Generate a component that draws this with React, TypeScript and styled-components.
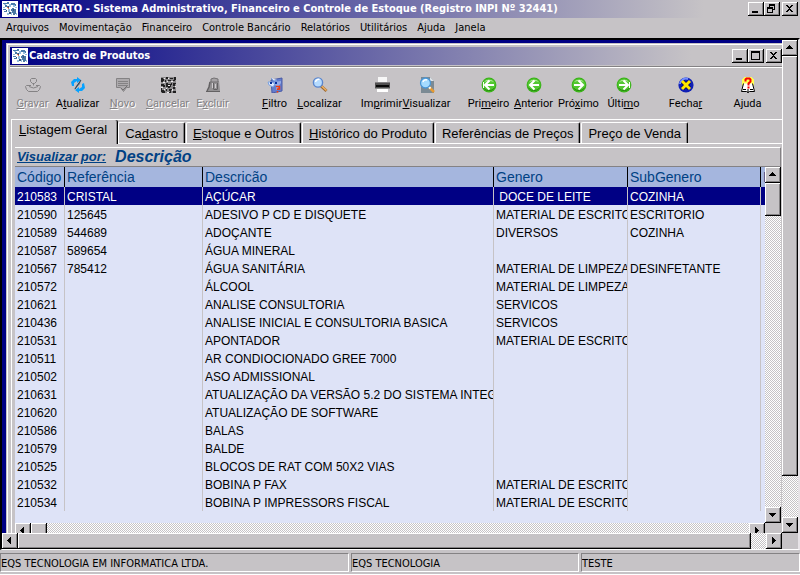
import React from "react";
import styled, { createGlobalStyle, css } from "styled-components";

const face = "#c6c3c6";
const navy = "#000084";
const shade = "#848284";
const uiFont = '"DejaVu Sans Condensed", "DejaVu Sans", sans-serif';
const gridFont = '"Liberation Sans", Arial, sans-serif';

const Global = createGlobalStyle`
  * { box-sizing: border-box; }
  html, body, #root { height: 100%; }
  body { margin: 0; background: ${face}; font-family: ${uiFont}; overflow: hidden; }
  button { font: inherit; color: inherit; margin: 0; padding: 0; border: 0; background: none; }
`;

const raised = css`
  background: ${face};
  box-shadow: inset -1px -1px 0 #000, inset 1px 1px 0 #fff, inset -2px -2px 0 ${shade};
`;
const checker = css`
  background: conic-gradient(#fff 25%, ${face} 0 50%, #fff 0 75%, ${face} 0) 0 0 / 2px 2px;
`;

const Page = styled.div`
  display: flex;
  flex-direction: column;
  height: 100vh;
  background: ${face};
`;
const TitleBar = styled.header`
  display: flex;
  align-items: center;
  flex: none;
  height: 18px;
  padding: 0 2px;
  background: linear-gradient(90deg, ${navy}, ${face} 88%);
  color: #fff;
`;
const Title = styled.h1`
  flex: 1;
  margin: 0 0 0 1px;
  font-size: 11px;
  line-height: 16px;
  font-weight: bold;
  white-space: nowrap;
`;
const WindowButtons = styled.div`
  display: flex;
  button:last-child { margin-left: 2px; }
`;
const WindowButton = styled.button`
  ${raised}
  width: 16px;
  height: 14px;
  svg { display: block; }
`;
const MenuBar = styled.nav`
  display: flex;
  flex: none;
  height: 20px;
  padding-left: 6px;
  gap: 10px;
  font-size: 11px;
  line-height: 20px;
  button { white-space: nowrap; }
`;
const Workspace = styled.main`
  flex: 1;
  min-height: 0;
  display: grid;
  grid-template: minmax(0, 1fr) 16px / minmax(0, 1fr) 16px;
  border: solid;
  border-width: 2px 2px 1px 2px;
  border-color: #000 #e7e3e7 #fff #000;
  background: ${navy};
`;
const Desktop = styled.div`
  display: flex;
  overflow: hidden;
  padding: 3px 0 0 4px;
`;
const ChildWindow = styled.section`
  flex: 1;
  min-width: 0;
  display: flex;
  flex-direction: column;
  margin: 0 -6px -6px 0;
  padding: 4px 4px 0;
  background: ${face};
  box-shadow: inset 1px 1px 0 ${face}, inset 2px 2px 0 #fff;
`;
const Toolbar = styled.div`
  display: flex;
  flex: none;
  gap: 17px;
  height: 53px;
  margin-top: 1px;
  padding-top: 10px;
  border-top: 1px solid ${shade};
  box-shadow: inset 0 1px 0 #fff;
`;
const ToolGroup = styled.div`
  display: flex;
`;
const ToolButton = styled.button`
  display: flex;
  flex-direction: column;
  align-items: center;
  width: 45px;
  height: 36px;
  font-family: Roboto, "Liberation Sans", sans-serif;
  font-size: 11px;
  line-height: 16px;
  gap: 3px;
  white-space: nowrap;
  &:disabled { color: ${shade}; text-shadow: 1px 1px 0 #fff; }
  svg { flex: none; }
`;
const Tabs = styled.div`
  display: flex;
  flex: none;
  align-items: flex-end;
  height: 24px;
  border-top: 1px solid #fff;
  border-left: 1px solid #fff;
  margin-left: 1px;
  font-family: ${gridFont};
  font-size: 13px;
`;
const Tab = styled.button<{ $active?: boolean }>`
  flex: none;
  height: ${(p) => (p.$active ? 24 : 21)}px;
  margin: ${(p) => (p.$active ? "0 0 -1px" : "0 1px 0 0")};
  padding: ${(p) => (p.$active ? "0 10px 5px 7px" : "0 6px")};
  position: relative;
  background: ${face};
  line-height: 19px;
  white-space: nowrap;
  border-left: ${(p) => (p.$active ? 0 : 1)}px solid #fff;
  border-top: ${(p) => (p.$active ? 0 : 1)}px solid #fff;
  border-right: 1px solid #000;
  box-shadow: inset -1px 0 0 ${shade};
  border-radius: 2px 2px 0 0;
`;
const Pane = styled.div`
  flex: 1;
  min-height: 0;
  display: flex;
  flex-direction: column;
  margin-left: 1px;
  padding: 3px 3px 0 3px;
  border-left: 1px solid #fff;
  border-top: 1px solid #fff;
`;
const ViewBar = styled.div`
  display: flex;
  flex: none;
  align-items: center;
  gap: 9px;
  height: 20px;
  padding-left: 2px;
  border: 1px solid;
  border-color: #fff ${shade} ${shade} #fff;
  border-left: 0;
  font-family: ${gridFont};
  font-weight: bold;
  font-style: italic;
  color: #004184;
  a { color: inherit; font-size: 13px; line-height: 16px; }
  output { font-size: 16px; line-height: 18px; }
`;
const GridArea = styled.div`
  flex: 1;
  min-height: 0;
  display: grid;
  grid-template: minmax(0, 1fr) 16px / minmax(0, 1fr) 16px;
  background: #dee3f7;
`;
const Corner = styled.div`
  background: ${face};
`;
const TableClip = styled.div`
  overflow: hidden;
`;
const Table = styled.table`
  width: 100%;
  table-layout: fixed;
  border-collapse: separate;
  border-spacing: 0;
  font-family: ${gridFont};
  font-size: 12px;
  th, td {
    padding: 0 0 0 2px;
    overflow: hidden;
    text-align: left;
    font-weight: normal;
    white-space: pre;
  }
  th {
    height: 20px;
    line-height: 20px;
    font-size: 14px;
    background: #a5b6de;
    color: #004184;
    border-right: 1px solid #000;
  }
  td {
    height: 18px;
    padding-top: 2px;
    line-height: 16px;
    border-right: 1px solid ${face};
  }
  th:last-child, td:last-child { border-right: 0; }
`;
const Row = styled.tr<{ $selected?: boolean }>`
  ${(p) => p.$selected && css`background: ${navy}; color: #fff;`}
`;
const Col = styled.col<{ $w?: number }>`
  ${(p) => p.$w && `width: ${p.$w}px;`}
`;
const Scroll = styled.div<{ $vertical?: boolean }>`
  ${checker}
  display: flex;
  flex-direction: ${(p) => (p.$vertical ? "column" : "row")};
  min-width: 0;
  min-height: 0;
`;
const ArrowButton = styled.button`
  ${raised}
  flex: none;
  width: 16px;
  height: 16px;
  svg { display: block; }
`;
const Thumb = styled.div<{ $grow?: number; $size?: number }>`
  ${raised}
  flex: ${(p) => (p.$size ? `0 0 ${p.$size}px` : `${p.$grow} 1 0`)};
`;
const Space = styled.div<{ $grow: number }>`
  flex: ${(p) => p.$grow} 1 0;
`;
const StatusBar = styled.footer`
  display: flex;
  flex: none;
  gap: 2px;
  height: 25px;
  padding: 3px 0 2px;
  border-bottom: 1px solid #fff;
  font-size: 11px;
  line-height: 19px;
`;
const StatusCell = styled.div<{ $share: number }>`
  flex: ${(p) => p.$share} 1 0;
  min-width: 0;
  border: 1px solid;
  border-color: ${shade} #fff #fff ${shade};
  white-space: nowrap;
  overflow: hidden;
`;

/* Small pixel glyphs */
const Arrow = ({ dir }: { dir: "up" | "down" | "left" | "right" }) => {
  const d = {
    up: "M7 5h1v1h1v1h1v1h1v1H4V8h1V7h1V6h1z",
    down: "M4 6h7v1h-1v1H9v1H8v1H7V9H6V8H5V7H4z",
    left: "M9 4v7H8v-1H7V9H6V8H5V7h1V6h1V5h1V4z",
    right: "M6 4h1v1h1v1h1v1h1v1H9v1H8v1H7v1H6z",
  }[dir];
  return <svg width="16" height="16" aria-hidden="true"><path d={d} /></svg>;
};
const glyphs: Record<string, React.ReactNode> = {
  Minimizar: <path d="M4 9h6v2H4z" />,
  Maximizar: <path fillRule="evenodd" d="M3 2h9v9H3zM4 4v6h7V4z" />,
  Restaurar: <path fillRule="evenodd" d="M5 2h6v6H9v3H3V5h2zM6 4v1h3v2h1V4zM4 7v3h4V7z" />,
  Fechar: <path d="M4 3h2v1h1v1h1V4h1V3h2v1h-1v1H9v1H8v1h1v1h1v1h1v1H9V9H8V8H7v1H6v1H4V9h1V8h1V7h1V6H6V5H5V4H4z" />,
};
const Controls = ({ names }: { names: string[] }) => (
  <WindowButtons>
    {names.map((n) => (
      <WindowButton key={n} aria-label={n}>
        <svg width="16" height="14">{glyphs[n]}</svg>
      </WindowButton>
    ))}
  </WindowButtons>
);

const AppLogo = () => (
  <svg width="16" height="16" viewBox="0 0 16 16" aria-hidden="true">
    <path fill="#fff" d="M0 0h16v16H0z" />
    <path fill="#4a7dad" d="M1 2h4v1H1zM5 1h2v2H5zM9 2h4v1h1v2h-1V4H9zM1 8h3v1H1zM2 10h3v1H2z" />
    <path fill="#4a79a5" d="M3 4h2v1h2v2H5V6H3zM10 7h2v1h2v5h-1v1h-2v-2h-1v-2H9V8h1z" />
    <path fill="#39557b" d="M6 5h1v2H6zM4 9h1v1H4zM11 8h1v2h-1zM7 11h2v2H7z" />
    <path fill="#94bede" d="M2 3h2v1H2zM7 3h2v3H7zM11 4h2v2h-2zM1 6h2v1H1zM6 8h2v3H6zM5 12h2v2H5zM9 11h1v3H9zM14 12h1v2h-1zM13 6h2v1h-2z" />
    <path fill="#ef7142" d="M5 6h1v1H5zM6 7h1v1H6z" />
  </svg>
);

const GreenArrow = ({ flip, bar }: { flip?: boolean; bar?: boolean }) => (
  <>
    <circle cx="8" cy="8" r="7.4" fill="#39b218" />
    <circle cx="8" cy="8" r="6.4" fill="#52c731" />
    <path d="M3 5a6 5 0 0 1 10 0q-5-2-10 0" fill="#b5ec9c" />
    <path d="M2.500 11a7 7 0 0 0 11 0" fill="none" stroke="#218a08" />
    <g transform={flip ? "translate(16 0) scale(-1 1)" : undefined} fill="none" stroke="#fff" strokeWidth="2">
      <path d="M4 8h9M8.500 3.500L4 8l4.500 4.500" />
      {bar && <path d="M2.500 5v6" strokeWidth="1" />}
    </g>
  </>
);
const Lens = () => (
  <>
    <path d="M9 9l5.500 5" stroke="#9c6931" strokeWidth="3" />
    <path d="M9.500 9l5 4.500" stroke="#efb263" strokeWidth="1.500" />
    <circle cx="6" cy="5.500" r="4.600" fill="#b5dbff" stroke="#5a86ce" strokeWidth="1.400" />
    <path d="M3.500 5a3 3 0 0 1 4-2.500" fill="none" stroke="#fff" strokeWidth="1.500" />
  </>
);
const icons: Record<string, React.ReactNode> = {
  Gravar: (
    <g fill="none" stroke={shade}>
      <path d="M6.500 1.500h4l1 1v2l-2 2h-2l-2-2v-2zM8.500 6.500v2M6 8.500h-4.500l-1 1 1 3 2 2h9l2-2 1-3-1-1H11M4 9.500q4.500 3 9 0" />
    </g>
  ),
  Atualizar: (
    <>
      <path d="M2 9L1 5l3-3h3V0l4 3-4 3V4L4 6v3z" fill="#08a2ff" />
      <path d="M14 6l1 5-3 3H9v2l-4-3 4-3v2l3-2V7z" fill="#08a2ff" />
      <path d="M4 13l2-4 5-6-1 4-4 4z" fill="#637d94" />
      <path d="M5 12l6-9" stroke="#313c4a" />
    </>
  ),
  Novo: (
    <>
      <path d="M1.500 1.500h13v9h-3l-3 4-3-4h-4z" fill="#adaaad" stroke={shade} />
      <path d="M3 4.500h10M3 6.500h10M3 8.500h10" stroke="#848284" />
      <path d="M6 11l2 2 4-4" fill="none" stroke="#737173" />
    </>
  ),
  Cancelar: (
    <>
      <path d="M1 0h15v16H1z" fill="#8c8a8c" />
      <path d="M1 1h2v1h1v2H3v1H1zM6 0h2v2H6zM10 1h3v1h-3zM14 0h2v3h-1v1h-2V3h1zM5 3h1v2H5zM8 3h3v1H8zM1 7h3v1h1v2H3V9H1zM6 6h2v1h3V6h1v2h-1v2h-1v1H8v-1H6zM13 6h3v1h-1v2h-2zM1 11h1v2h2v1h1v2H2v-1H1zM6 12h1v2H6zM9 12h3v1h-1v3H9v-1h1v-1H9zM13 10h2v2h-2zM13 14h3v2h-3z" fill="#212021" />
      <path d="M4 1h1v1H4zM8 1h1v1H8zM3 5h2v1H3zM11 4h2v1h-2zM7 4h1v1H7zM1 10h2v1H1zM8 8h2v1H8zM4 12h1v1H4zM7 15h2v1H7zM12 12h1v2h-1zM15 9h1v1h-1zM6 11h1v1H6z" fill="#efebef" />
    </>
  ),
  Excluir: (
    <>
      <path d="M5 4h9l1 9v2H3v-2z" fill="#949294" />
      <path d="M6 2l3-1 4 1v3H6z" fill="#a5a2a5" stroke="#737173" />
      <path d="M5 5l-1 5-2 4" fill="none" stroke="#636163" strokeWidth="1.500" />
      <path d="M1 14.500h14" stroke="#636163" />
      <path d="M8.500 6v6M12.500 6v6M8.500 12.500h4" fill="none" stroke="#636163" />
      <path d="M7.500 6v5M10.500 7v4" stroke="#cecbce" />
    </>
  ),
  Filtro: (
    <>
      <path d="M4 3l11-2v13l-10 2z" fill="#637dce" stroke="#4a5aa5" />
      <path d="M6 5l8-1v2l-3 4v3H9V9z" fill="#94aae7" />
      <path d="M1 5h4l3 2-2 3-4-2zM4 1l3 3 3-1" fill="#dee7ff" stroke="#7ba2de" />
      <path d="M3 5h2v2H3zM8 5h2v2H8z" fill="#08309c" />
      <path d="M9 9.500h3.500v2.500h-2v1M10.500 14v1.500" fill="none" stroke="#f73808" strokeWidth="1.500" />
    </>
  ),
  Localizar: <Lens />,
  Imprimir: (
    <>
      <path d="M4 0h9v6H4z" fill="#f7f7f7" />
      <path d="M1 6h15v5H1z" fill="#525152" />
      <path d="M1 5h15v1H1z" fill="#848284" />
      <path d="M2 8h13v2H2z" fill="#080808" />
      <path d="M1 11h15v1H1z" fill="#8c8e8c" />
      <path d="M3 12h11v3H3z" fill="#fff" />
    </>
  ),
  Visualizar: (
    <>
      <path d="M2 0h9l4 4v12H2z" fill="#7b8a94" />
      <path d="M11 0l4 4h-4z" fill="#dee3e7" />
      <path d="M10 10l5 5" stroke="#e79a31" strokeWidth="2.500" />
      <path d="M9.500 9.500l2 2" stroke="#fff" strokeWidth="2" />
      <circle cx="6.500" cy="6" r="5" fill="#a5dbff" stroke="#4a96d6" strokeWidth="1.300" />
      <path d="M4 5a3 3 0 0 1 4-2" fill="none" stroke="#fff" strokeWidth="1.500" />
    </>
  ),
  Primeiro: <GreenArrow bar />,
  Anterior: <GreenArrow />,
  "Próximo": <GreenArrow flip />,
  "Último": <GreenArrow flip bar />,
  Fechar: (
    <>
      <circle cx="8" cy="8" r="7.600" fill="#1020b5" />
      <path d="M2 7a6 6 0 0 1 8-5" fill="none" stroke="#738eff" strokeWidth="2" />
      <path d="M4.500 4.500l7 7M11.500 4.500l-7 7" stroke="#000042" strokeWidth="4" />
      <path d="M4 4l8 8M12 4l-8 8" stroke="#ffe700" strokeWidth="3" />
    </>
  ),
  Ajuda: (
    <>
      <path d="M4 0h8v1h1v1h1v6l-2 2H4L2 8V2h1V1h1z" fill="#ffff52" />
      <path d="M3.500 6.500l-2 8h5l1.500 1 1.500-1h5l-2-8" fill="#fff" stroke="#000" />
      <path d="M8 12v4M3 12.500h3M10 12.500h3" stroke="#000" />
      <path d="M5.500 4.500V2.500l1-1h3l1 1v2L8.500 6.500v2M8.500 9.500v2" fill="none" stroke="#f70000" strokeWidth="2" />
    </>
  ),
};

/* Each label pairs with the index of its access key (-1 for none). */
type Tool = [string, number, boolean?];
const toolGroups: Tool[][] = [
  [["Gravar", 0, true], ["Atualizar", 1], ["Novo", 0, true], ["Cancelar", 0, true], ["Excluir", 1, true]],
  [["Filtro", 0], ["Localizar", 0]],
  [["Imprimir", 2], ["Visualizar", 0]],
  [["Primeiro", 3], ["Anterior", 0], ["Próximo", 3], ["Último", 4]],
  [["Fechar", 5]],
  [["Ajuda", -1]],
];
const tabs: [string, number][] = [
  ["Listagem Geral", 0],
  ["Cadastro", 2],
  ["Estoque e Outros", 0],
  ["Histórico do Produto", 0],
  ["Referências de Preços", -1],
  ["Preço de Venda", -1],
];
const Label = ({ text, at }: { text: string; at: number }) =>
  at < 0 ? <span>{text}</span> : (
    <span>{text.slice(0, at)}<u>{text[at]}</u>{text.slice(at + 1)}</span>
  );

const menus = ["Arquivos", "Movimentação", "Financeiro", "Controle Bancário", "Relatórios", "Utilitários", "Ajuda", "Janela"];
const headers = ["Código", "Referência", "Descricão", "Genero", "SubGenero", "I"];
const colWidths = [50, 138, 291, 134, 133];
const rows: string[][] = [
  ["210583", "CRISTAL", "AÇÚCAR", " DOCE DE LEITE", "COZINHA"],
  ["210590", "125645", "ADESIVO P CD E DISQUETE", "MATERIAL DE ESCRITORIO", "ESCRITORIO"],
  ["210589", "544689", "ADOÇANTE", "DIVERSOS", "COZINHA"],
  ["210587", "589654", "ÁGUA MINERAL", "", ""],
  ["210567", "785412", "ÁGUA SANITÁRIA", "MATERIAL DE LIMPEZA", "DESINFETANTE"],
  ["210572", "", "ÁLCOOL", "MATERIAL DE LIMPEZA", ""],
  ["210621", "", "ANALISE CONSULTORIA", "SERVICOS", ""],
  ["210436", "", "ANALISE INICIAL E CONSULTORIA BASICA", "SERVICOS", ""],
  ["210531", "", "APONTADOR", "MATERIAL DE ESCRITORIO", ""],
  ["210511", "", "AR CONDIOCIONADO GREE 7000", "", ""],
  ["210502", "", "ASO ADMISSIONAL", "", ""],
  ["210631", "", "ATUALIZAÇÃO DA VERSÃO 5.2 DO SISTEMA INTEGRATO", "", ""],
  ["210620", "", "ATUALIZAÇÃO DE SOFTWARE", "", ""],
  ["210586", "", "BALAS", "", ""],
  ["210579", "", "BALDE", "", ""],
  ["210525", "", "BLOCOS DE RAT COM 50X2 VIAS", "", ""],
  ["210532", "", "BOBINA P FAX", "MATERIAL DE ESCRITORIO", ""],
  ["210534", "", "BOBINA P IMPRESSORS FISCAL", "MATERIAL DE ESCRITORIO", ""],
];

export default function App() {
  return (
    <Page>
      <Global />
      <TitleBar>
        <AppLogo />
        <Title>INTEGRATO - Sistema Administrativo, Financeiro e Controle de Estoque (Registro INPI Nº 32441)</Title>
        <Controls names={["Minimizar", "Restaurar", "Fechar"]} />
      </TitleBar>
      <MenuBar>{menus.map((m) => <button key={m}>{m}</button>)}</MenuBar>
      <Workspace>
        <Desktop>
          <ChildWindow>
            <TitleBar>
              <AppLogo />
              <Title as="h2">Cadastro de Produtos</Title>
              <Controls names={["Minimizar", "Maximizar", "Fechar"]} />
            </TitleBar>
            <Toolbar role="toolbar">
              {toolGroups.map((group) => (
                <ToolGroup key={group[0][0]}>
                  {group.map(([name, at, off]) => (
                    <ToolButton key={name} disabled={off}>
                      <svg width="16" height="16" viewBox="0 0 16 16" aria-hidden="true">{icons[name]}</svg>
                      <Label text={name} at={at} />
                    </ToolButton>
                  ))}
                </ToolGroup>
              ))}
            </Toolbar>
            <Tabs role="tablist">
              {tabs.map(([name, at], i) => (
                <Tab key={name} role="tab" aria-selected={i === 0} $active={i === 0}>
                  <Label text={name} at={at} />
                </Tab>
              ))}
            </Tabs>
            <Pane role="tabpanel">
              <ViewBar>
                <a href="#ordem">Visualizar por:</a>
                <output>Descrição</output>
              </ViewBar>
              <GridArea>
                <TableClip>
                  <Table>
                    <colgroup>
                      {colWidths.map((w, i) => <Col key={i} $w={w} />)}
                      <Col />
                    </colgroup>
                    <thead>
                      <tr>{headers.map((h) => <th key={h} scope="col">{h}</th>)}</tr>
                    </thead>
                    <tbody>
                      {rows.map((r, i) => (
                        <Row key={r[0]} $selected={i === 0}>
                          {r.map((c, j) => <td key={j}>{c}</td>)}
                          <td />
                        </Row>
                      ))}
                    </tbody>
                  </Table>
                </TableClip>
                <Scroll $vertical>
                  <ArrowButton aria-label="Linha acima"><Arrow dir="up" /></ArrowButton>
                  <Thumb $size={33} />
                  <Space $grow={1} />
                  <ArrowButton aria-label="Linha abaixo"><Arrow dir="down" /></ArrowButton>
                </Scroll>
                <Scroll>
                  <ArrowButton aria-label="Coluna anterior"><Arrow dir="left" /></ArrowButton>
                  <Thumb $size={16} />
                  <Space $grow={1} />
                  <ArrowButton aria-label="Próxima coluna"><Arrow dir="right" /></ArrowButton>
                </Scroll>
                <Corner />
              </GridArea>
            </Pane>
          </ChildWindow>
        </Desktop>
        <Scroll $vertical>
          <ArrowButton aria-label="Rolar acima"><Arrow dir="up" /></ArrowButton>
          <Thumb $grow={420} />
          <Space $grow={41} />
          <ArrowButton aria-label="Rolar abaixo"><Arrow dir="down" /></ArrowButton>
        </Scroll>
        <Scroll>
          <ArrowButton aria-label="Rolar à esquerda"><Arrow dir="left" /></ArrowButton>
          <Thumb $grow={733} />
          <Space $grow={15} />
          <ArrowButton aria-label="Rolar à direita"><Arrow dir="right" /></ArrowButton>
        </Scroll>
        <Corner />
      </Workspace>
      <StatusBar>
        <StatusCell $share={350}>EQS TECNOLOGIA EM INFORMATICA LTDA.</StatusCell>
        <StatusCell $share={228}>EQS TECNOLOGIA</StatusCell>
        <StatusCell $share={219}>TESTE</StatusCell>
      </StatusBar>
    </Page>
  );
}
